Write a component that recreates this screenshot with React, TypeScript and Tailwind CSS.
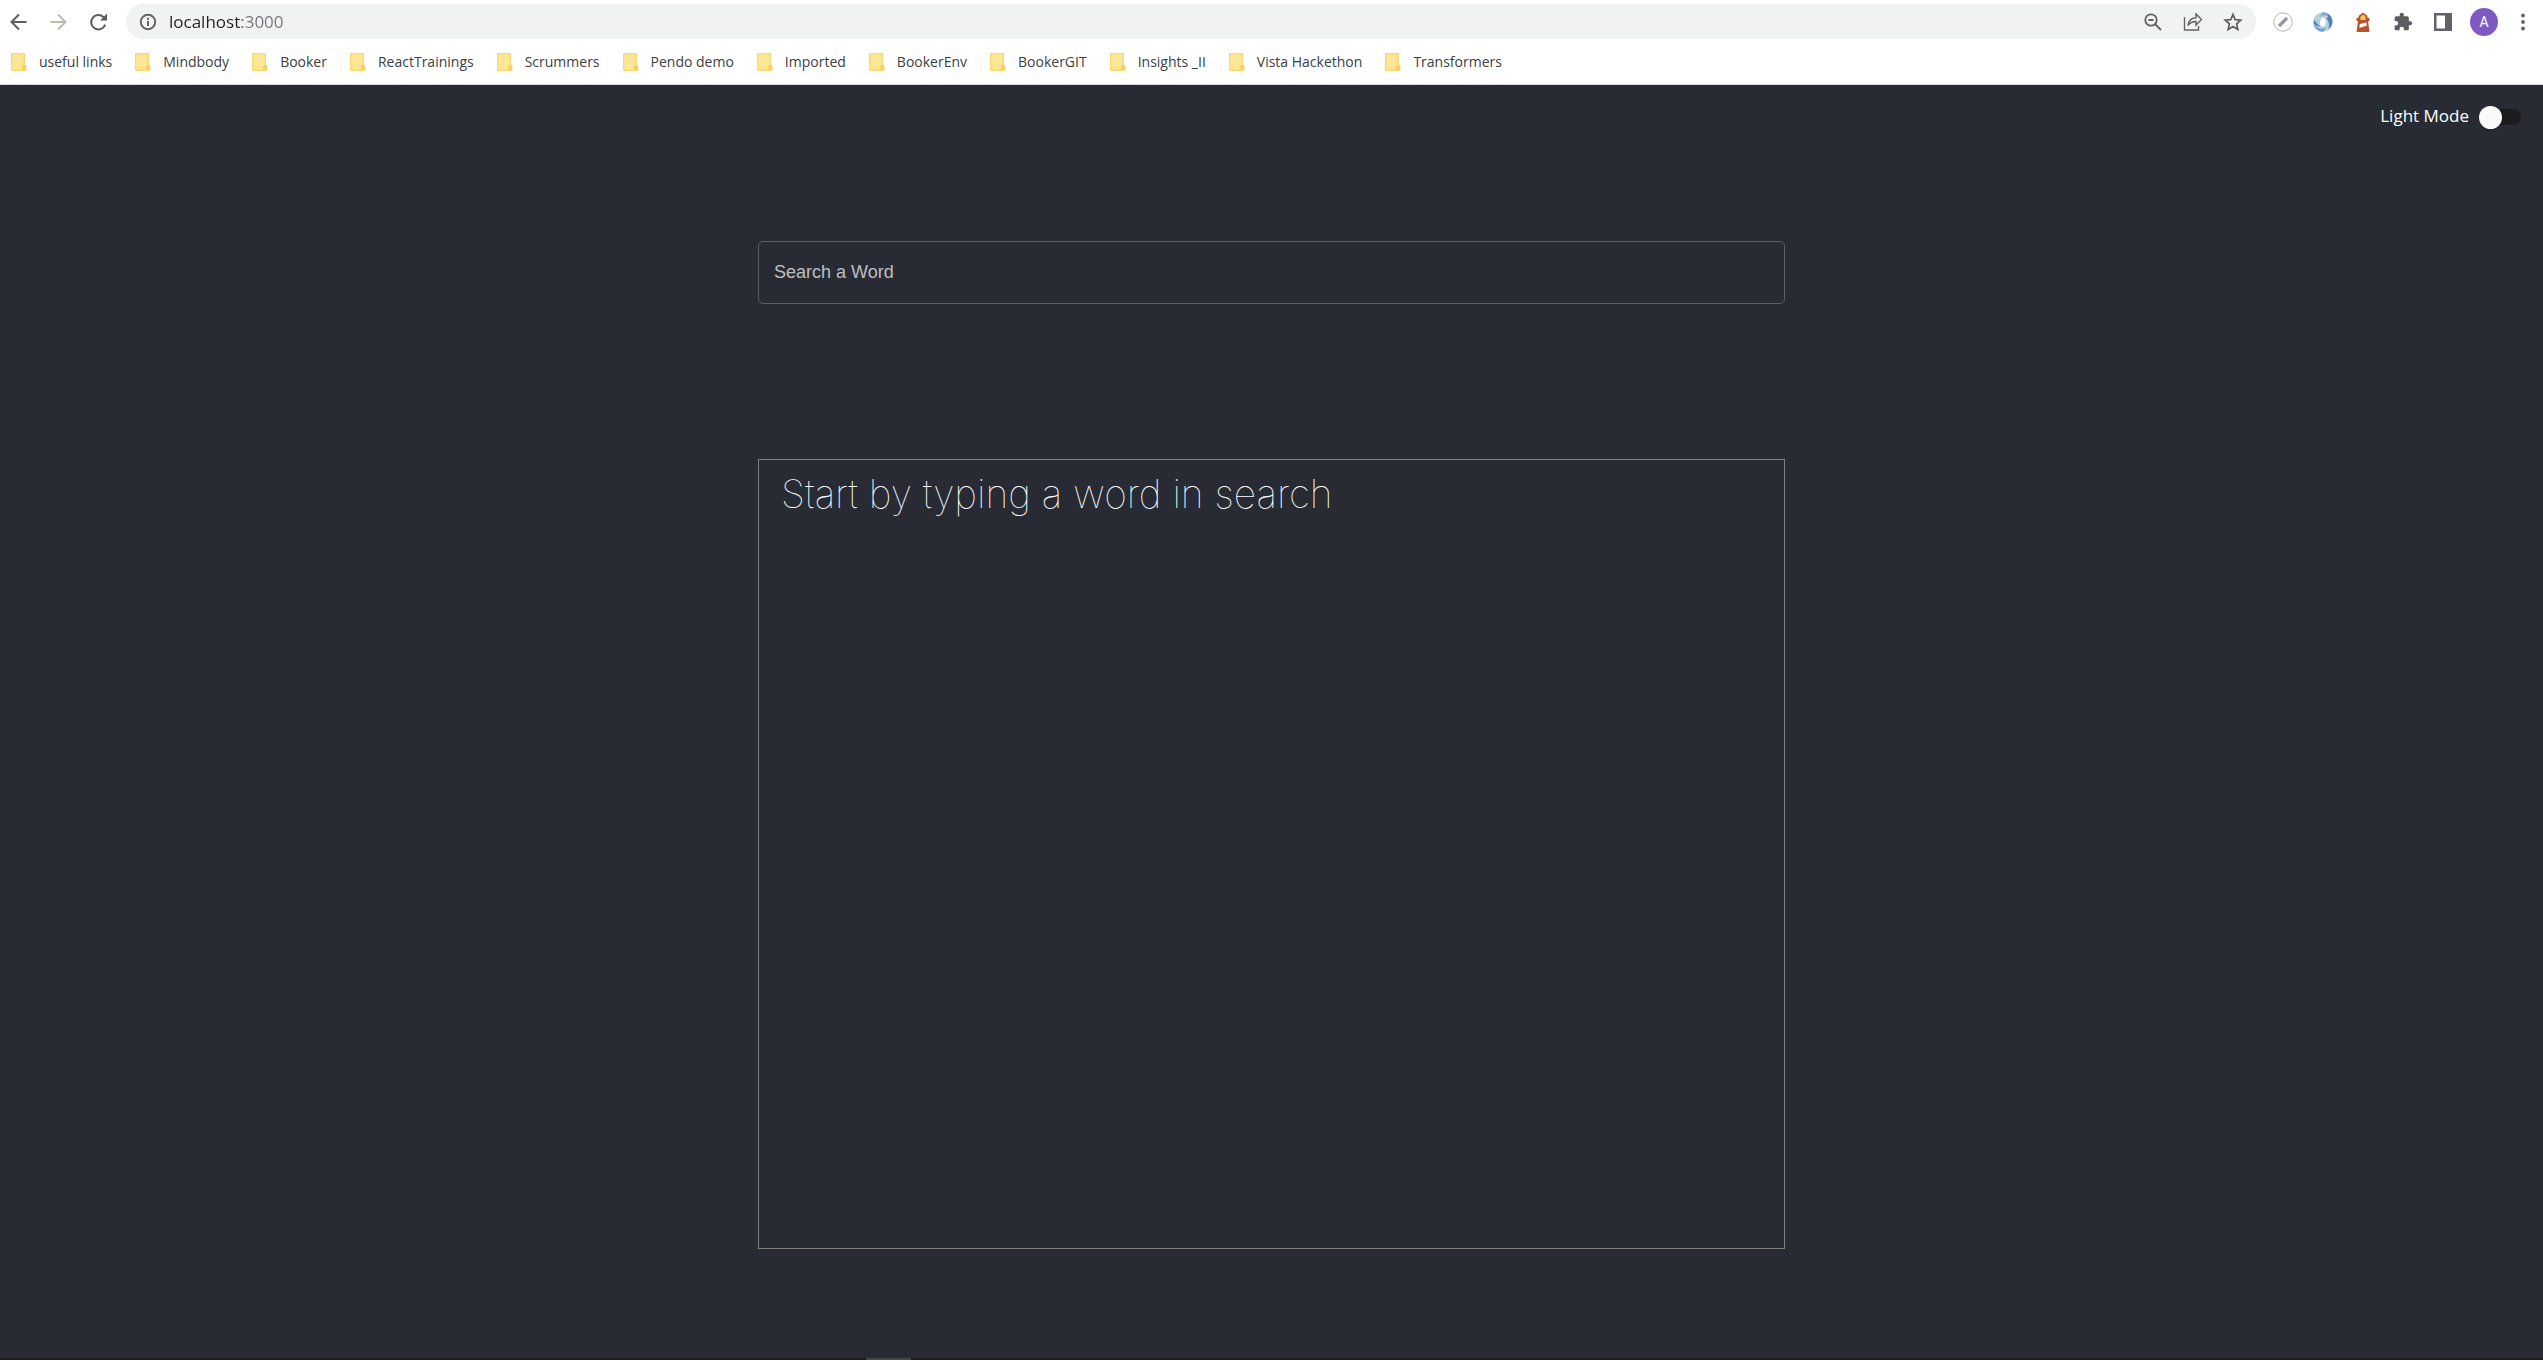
import { useState } from "react";

const bookmarks = [
  "useful links",
  "Mindbody",
  "Booker",
  "ReactTrainings",
  "Scrummers",
  "Pendo demo",
  "Imported",
  "BookerEnv",
  "BookerGIT",
  "Insights _II",
  "Vista Hackethon",
  "Transformers",
];

const iconButton = "flex size-5 shrink-0 items-center justify-center";

function FolderIcon() {
  return (
    <svg viewBox="0 0 16 18" className="h-[18px] w-4 shrink-0" aria-hidden="true">
      <path d="M1 0h12a1 1 0 0 1 1 1v11l1.500 1v4a1 1 0 0 1-1 1H1a1 1 0 0 1-1-1V1a1 1 0 0 1 1-1Z" fill="#f8d775" />
      <path d="M1.300 1.300h11.400v11L11.500 13v3.700H1.300Z" fill="#ffe694" />
      <path d="M12 16.700v-3.400a1 1 0 0 1 2 0v3" fill="none" stroke="#efc560" strokeWidth="0.9" />
    </svg>
  );
}

function Toolbar() {
  return (
    <div className="flex h-[43px] items-center pr-2.5 pl-2">
      <div className="flex gap-5">
        <button type="button" aria-label="Back" className={iconButton}>
          <svg viewBox="0 0 20 20" className="size-5" fill="none" stroke="#5a5d61" strokeWidth="2">
            <path d="M18.500 10H3.500M11 2.500 3.500 10l7.500 7.500" />
          </svg>
        </button>
        <button type="button" aria-label="Forward" className={iconButton}>
          <svg viewBox="0 0 20 20" className="size-5" fill="none" stroke="#b9bbb1" strokeWidth="2">
            <path d="M2.500 10h15M10 2.500l7.500 7.500-7.500 7.500" />
          </svg>
        </button>
        <button type="button" aria-label="Reload" className={iconButton}>
          <svg viewBox="0 0 20 20" className="size-5" fill="none" stroke="#5a5d61" strokeWidth="2">
            <path d="M17.200 12.600A7.200 7.200 0 1 1 15.300 4.900l1.500 1.500" />
            <path d="M19 1.500v7h-7Z" fill="#5a5d61" stroke="none" />
          </svg>
        </button>
      </div>
      <div className="ml-[18px] flex h-[35px] flex-1 items-center rounded-full bg-[#f1f3f2] pr-[13px] pl-3">
        <svg viewBox="0 0 20 20" className="size-5 shrink-0" fill="none" stroke="#5f6368" strokeWidth="2" aria-hidden="true">
          <circle cx="10" cy="10" r="7.200" />
          <path d="M10 9v5M10 5.800v2" />
        </svg>
        <input
          type="text"
          aria-label="Address"
          defaultValue="localhost:3000"
          className="ml-[11px] h-7 flex-1 bg-[linear-gradient(90deg,#202124_73px,#70757a_73px)] bg-clip-text text-[17px] leading-7 text-transparent caret-black outline-none"
        />
        <div className="flex items-center gap-5">
          <button type="button" aria-label="Zoom" className={iconButton}>
            <svg viewBox="0 0 20 20" className="size-5" fill="none" stroke="#5f6368" strokeWidth="1.800">
              <circle cx="8" cy="8" r="5.700" />
              <path d="m12 12 6 6M5.500 8h5" />
            </svg>
          </button>
          <button type="button" aria-label="Share" className={iconButton}>
            <svg viewBox="0 0 20 20" className="size-5" fill="none" stroke="#5f6368" strokeWidth="1.400">
              <path d="M1.500 5v13h14v-4" />
              <path d="M5 13.500c.5-5 3.500-7.500 8-7.800V2l5.500 5.500L13 13V9.500c-3.500 0-6 1-8 4Z" />
            </svg>
          </button>
          <button type="button" aria-label="Bookmark this page" className={iconButton}>
            <svg viewBox="0 0 20 20" className="size-5" fill="none" stroke="#5a5d61" strokeWidth="1.700">
              <path d="m10 2.500 2.200 5.200 5.600.5-4.200 3.700 1.200 5.500L10 14.500l-4.800 2.900 1.200-5.500-4.200-3.700 5.600-.5Z" />
            </svg>
          </button>
        </div>
      </div>
      <div className="ml-[17px] flex items-center gap-5">
        <button type="button" aria-label="Pencil extension" className={iconButton}>
          <svg viewBox="0 0 20 20" className="size-5">
            <circle cx="10" cy="10" r="9.200" fill="#fff" stroke="#b6b6b0" strokeWidth="1" />
            <path d="m6 14 8-8" stroke="#9a99a3" strokeWidth="3.400" />
          </svg>
        </button>
        <button type="button" aria-label="Sync extension" className={iconButton}>
          <svg viewBox="0 0 20 20" className="size-5">
            <circle cx="10" cy="10" r="9.800" fill="#b4d2d8" />
            <path d="M.5 9c1 6 5 7.500 8 7.500 2 0 3-.5 4-1.500 0 2-1 4-2.500 4.800C4 19.500 0 15 .5 9Z" fill="#6f9fd6" />
            <path d="M1 7.500C3 11 5 13 8 14.500c-3 0-6-1-7-3Z" fill="#4f7fbd" />
            <path d="M19.500 11c-1-6-5-7.500-8-7.500-2 0-3 .5-4 1.500 0-2 1-4 2.500-4.800C16 .5 20 5 19.500 11Z" fill="#7fabd9" />
            <path d="M14 1.500c4 2 6 6 5 10.500-1 3-2 4-3.500 5 1-3 1-8-2.500-11 2 0 3-2 1-4.500Z" fill="#557fc0" />
            <ellipse cx="10" cy="10" rx="2.800" ry="4.600" fill="#fff" transform="rotate(8 10 10)" />
          </svg>
        </button>
        <button type="button" aria-label="Lighthouse" className={iconButton}>
          <svg viewBox="0 0 20 20" className="size-5">
            <path d="M5.500 6V4L10 .5 14.500 4v2h2v3H15l1.500 11h-13L5 9H3.500V6Z" fill="#b8532f" />
            <path d="M7.500 7V4.500L10 2.500l2.500 2V8h-5Z" fill="#f7c35b" />
            <path d="m6.800 12 6.600-1.500.4 3-7.400 2.500Z" fill="#fff" />
          </svg>
        </button>
        <button type="button" aria-label="Extensions" className={iconButton}>
          <svg viewBox="0 0 24 24" className="size-5" fill="#5a5d61">
            <path d="M20.500 11H19V7c0-1.100-.9-2-2-2h-4V3.500a2.500 2.500 0 0 0-5 0V5H4c-1.100 0-2 .9-2 2v3.800h1.500a2.700 2.700 0 0 1 0 5.400H2V20c0 1.100.9 2 2 2h3.800v-1.500a2.700 2.700 0 0 1 5.400 0V22H17c1.100 0 2-.9 2-2v-4h1.500a2.500 2.500 0 0 0 0-5Z" />
          </svg>
        </button>
        <button type="button" aria-label="Side panel" className={iconButton}>
          <svg viewBox="0 0 20 20" className="size-5">
            <path d="M1 1h18v18H1Zm2.500 2.500v13h8.500v-13Z" fill="#5f6368" fillRule="evenodd" />
          </svg>
        </button>
      </div>
      <button
        type="button"
        aria-label="Profile"
        className="ml-[17px] flex size-7 items-center justify-center rounded-full bg-[#7e5bc2] font-['Roboto',sans-serif] text-sm text-white"
      >
        A
      </button>
      <button type="button" aria-label="Menu" className="ml-[15px] flex size-5 items-center justify-center">
        <svg viewBox="0 0 20 20" className="size-5" fill="#5f6368">
          <circle cx="10" cy="3.500" r="1.900" />
          <circle cx="10" cy="10" r="1.900" />
          <circle cx="10" cy="16.500" r="1.900" />
        </svg>
      </button>
    </div>
  );
}

export default function App() {
  const [light, setLight] = useState(false);
  const [word, setWord] = useState("");
  return (
    <div className="flex min-h-screen flex-col bg-[#282b33] font-['Open_Sans',sans-serif]">
      <header className="border-b border-[#d5d7d6] bg-white">
        <Toolbar />
        <nav aria-label="Bookmarks" className="flex h-[41px] items-center gap-[23px] pb-[3px] pl-[11px]">
          {bookmarks.map((name) => (
            <a key={name} href="#" className="flex items-center gap-3 text-sm leading-5 whitespace-nowrap text-[#3c4043]">
              <FolderIcon />
              {name}
            </a>
          ))}
        </nav>
      </header>
      <main className="flex flex-1 flex-col">
        <label className="mt-4 mr-[22px] flex h-8 items-center gap-2.5 self-end text-[17px] text-white">
          <span className="pb-0.5">Light Mode</span>
          <input
            type="checkbox"
            role="switch"
            checked={light}
            onChange={() => setLight(!light)}
            className="peer sr-only"
          />
          <span className="flex h-4 w-[42px] items-center rounded-full bg-[#1b1c1f] peer-checked:justify-end">
            <span className="size-[23px] rounded-full bg-[#fafafa] shadow" />
          </span>
        </label>
        <div className="mx-auto mt-[108px] flex w-full max-w-[1027px] flex-1 flex-col pb-[109px]">
          <input
            type="text"
            aria-label="Search a Word"
            placeholder="Search a Word"
            value={word}
            onChange={(e) => setWord(e.target.value)}
            className="h-[63px] w-full rounded-[5px] border border-[#5b5e65] bg-transparent px-[15px] font-['Liberation_Sans',sans-serif] text-lg text-white placeholder:text-[#bebfc1] placeholder:opacity-100"
          />
          <section className="mt-[155px] flex-1 border border-[#808080] px-[22px] py-2.5">
            <h1 className="font-['Inter',sans-serif] text-[39px] leading-[48px] font-thin text-white">
              Start by typing a word in search
            </h1>
          </section>
        </div>
      </main>
      <footer className="flex h-0.5 bg-[#1c1c1c]">
        <div className="ml-[866px] h-0.5 w-[45px] bg-[#47484b]" />
      </footer>
    </div>
  );
}
